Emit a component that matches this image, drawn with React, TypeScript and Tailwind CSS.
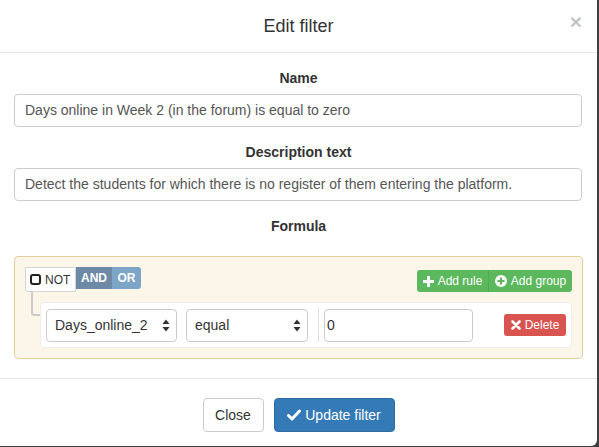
import React from "react";

const font = { fontFamily: '"Liberation Sans", Arial, sans-serif' };

const UpDown = () => (
  <svg width="8" height="13" viewBox="0 0 8 13" className="shrink-0">
    <path d="M4 0.5 L7.5 5 L0.5 5 Z" fill="#333" />
    <path d="M4 12.5 L7.5 8 L0.5 8 Z" fill="#333" />
  </svg>
);

const PlusIcon = () => (
  <svg width="11" height="11" viewBox="0 0 11 11">
    <path d="M4 0h3v4h4v3H7v4H4V7H0V4h4z" fill="#fff" />
  </svg>
);

const PlusCircle = () => (
  <svg width="12" height="12" viewBox="0 0 12 12">
    <circle cx="6" cy="6" r="6" fill="#fff" />
    <path d="M5 2.5h2v2.5h2.5v2H7v2.5H5V7H2.5V5H5z" fill="#5cb85c" />
  </svg>
);

const CrossIcon = () => (
  <svg width="10" height="10" viewBox="0 0 10 10">
    <path d="M1.5 1.5 L8.5 8.5 M8.5 1.5 L1.5 8.5" stroke="#fff" strokeWidth="2.6" strokeLinecap="round" />
  </svg>
);

const CheckIcon = () => (
  <svg width="14" height="12" viewBox="0 0 14 12">
    <path d="M1.5 6.5 L5 10 L12.5 2" stroke="#fff" strokeWidth="3" fill="none" strokeLinejoin="round" strokeLinecap="round" />
  </svg>
);

export default function App() {
  return (
    <div className="w-[599px] h-[447px] bg-[#3f3f3f] overflow-hidden" style={font}>
      <div className="w-[597px] h-[446px] bg-white rounded-br-[6px] flex flex-col text-[14px] text-[#333]">
        {/* header */}
        <div className="h-[53px] shrink-0 border-b border-[#e5e5e5] flex items-center justify-center relative">
          <h4 className="text-[18px] leading-[20px] font-medium">Edit filter</h4>
          <span className="absolute right-[15px] top-[11px] text-[21px] font-bold text-[#c4c4c4] leading-none">×</span>
        </div>

        {/* body */}
        <div className="px-[14px] pt-[15px] pb-[19px] flex flex-col">
          <label className="text-center font-bold leading-[20px] mb-[6px]">Name</label>
          <div className="h-[33px] border border-[#ccc] rounded-[4px] px-[10px] flex items-center text-[#555] mr-[1px]">
            Days online in Week 2 (in the forum) is equal to zero
          </div>

          <label className="text-center font-bold leading-[20px] mt-[15px] mb-[6px]">Description text</label>
          <div className="h-[33px] border border-[#ccc] rounded-[4px] px-[10px] flex items-center text-[#555] mr-[1px]">
            Detect the students for which there is no register of them entering the platform.
          </div>

          <label className="text-center font-bold leading-[20px] mt-[15px]">Formula</label>

          <div className="mt-[20px] h-[103px] border border-[#e3cf9e] bg-[#fcf6e8] rounded-[4px] pl-[10px] pr-[10px] pt-[10px]">
            {/* group header */}
            <div className="flex items-start justify-between h-[25px]">
              <div className="flex items-start">
                <div className="h-[25px] w-[51px] bg-white border border-[#d4d4d4] rounded-bl-[3px] flex items-center pl-[4px] gap-[4px] text-[12px] text-[#333]">
                  <span className="w-[11px] h-[11px] border-2 border-[#222] rounded-[3px]" />
                  NOT
                </div>
                <div className="h-[22px] w-[36px] bg-[#6c8aa6] text-white text-[12px] font-bold flex items-center justify-center">AND</div>
                <div className="h-[22px] w-[29px] bg-[#7ca5c8] text-white text-[12px] font-bold flex items-center justify-center rounded-r-[3px]">OR</div>
              </div>
              <div className="flex mt-[3px]">
                <div className="h-[22px] w-[72px] bg-[#5cb85c] text-white text-[12px] flex items-center justify-center gap-[4px] rounded-l-[3px] border-r border-[#4cae4c]">
                  <PlusIcon />
                  Add rule
                </div>
                <div className="h-[22px] w-[83px] bg-[#5cb85c] text-white text-[12px] flex items-center justify-center gap-[4px] rounded-r-[3px]">
                  <PlusCircle />
                  Add group
                </div>
              </div>
            </div>

            {/* rule */}
            <div className="flex mt-[10px]">
              <div className="w-[15px] shrink-0 flex justify-start">
                <div className="ml-[6px] w-[9px] h-[24px] -mt-[10px] border-l-2 border-b-2 border-[#ccc] rounded-bl-[3px]" />
              </div>
              <div className="flex-1 h-[46px] bg-white border border-[#eee] rounded-[4px] flex items-center pl-[5px] pr-[5px]">
                <div className="w-[131px] h-[33px] border border-[#ccc] rounded-[4px] flex items-center justify-between pl-[8px] pr-[6px] text-[#333]">
                  Days_online_2
                  <UpDown />
                </div>
                <div className="ml-[9px] w-[122px] h-[33px] border border-[#ccc] rounded-[4px] flex items-center justify-between pl-[8px] pr-[6px] text-[#333]">
                  equal
                  <UpDown />
                </div>
                <div className="ml-[10px] w-px h-[34px] bg-[#ddd]" />
                <div className="ml-[5px] w-[149px] h-[33px] border border-[#ccc] rounded-[4px] flex items-center pl-[2px] text-[#333]">0</div>
                <div className="ml-auto h-[22px] w-[62px] bg-[#d9534f] rounded-[3px] text-white text-[12px] flex items-center justify-center gap-[4px]">
                  <CrossIcon />
                  Delete
                </div>
              </div>
            </div>
          </div>
        </div>

        {/* footer */}
        <div className="border-t border-[#e5e5e5] flex-1 flex items-start justify-center gap-[10px] pt-[19px]">
          <div className="h-[34px] w-[61px] border border-[#ccc] rounded-[4px] flex items-center justify-center text-[#333]">Close</div>
          <div className="h-[34px] w-[121px] bg-[#337ab7] border border-[#2e6da4] rounded-[4px] flex items-center justify-center gap-[4px] text-white">
            <CheckIcon />
            Update filter
          </div>
        </div>
      </div>
    </div>
  );
}
